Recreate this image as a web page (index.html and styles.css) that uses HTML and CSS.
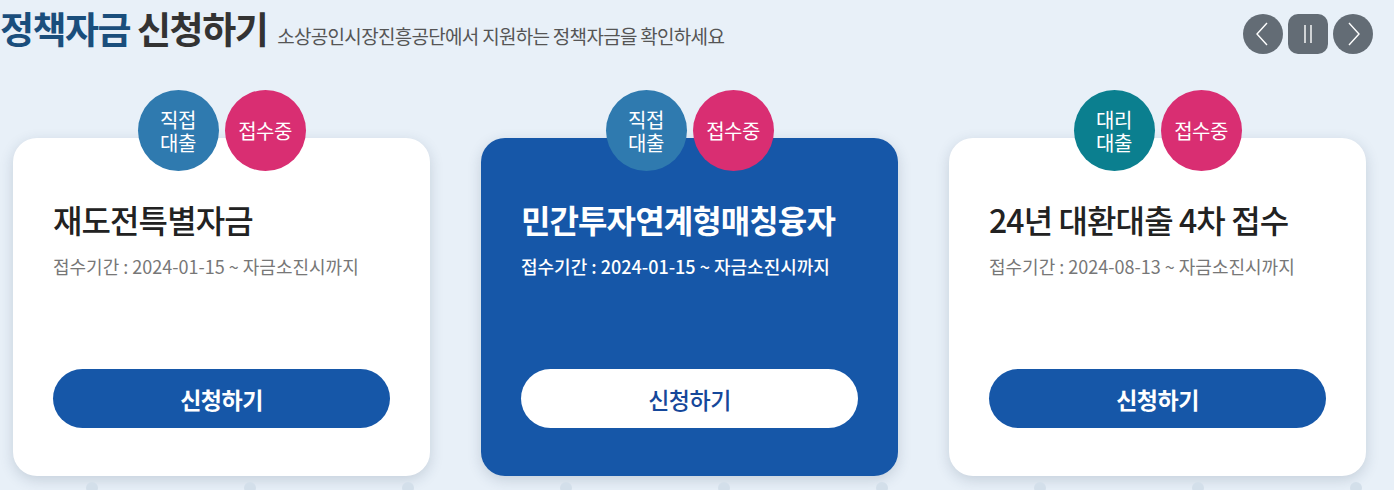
FILE: index.html
```html
<!DOCTYPE html>
<html>
<head>
  <title>정책자금 신청하기</title>
  <link rel="stylesheet" href="styles.css">
</head>
<body>

  <div class="header">
    <div class="heading">
      <h1><span class="accent">정책자금</span> 신청하기</h1>
      <p class="sub">소상공인시장진흥공단에서 지원하는 정책자금을 확인하세요</p>
    </div>
    <div class="slider-ctrl">
      <button class="ctrl round" aria-label="이전">
        <svg width="40" height="40" viewBox="0 0 40 40"><path d="M24 9 L14 20 L24 31" fill="none" stroke="#fff" stroke-width="1.4"/></svg>
      </button>
      <button class="ctrl square" aria-label="정지">
        <svg width="40" height="40" viewBox="0 0 40 40"><path d="M17 11 V29 M23 11 V29" fill="none" stroke="#fff" stroke-width="1.4"/></svg>
      </button>
      <button class="ctrl round" aria-label="다음">
        <svg width="40" height="40" viewBox="0 0 40 40"><path d="M16 9 L26 20 L16 31" fill="none" stroke="#fff" stroke-width="1.4"/></svg>
      </button>
    </div>
  </div>

  <div class="cards">
    <div class="card-wrap">
      <div class="badges">
        <span class="badge direct"><span class="line">직접</span><span class="line">대출</span></span>
        <span class="badge open">접수중</span>
      </div>
      <div class="card">
        <h2 class="card-title">재도전특별자금</h2>
        <p class="period">접수기간 : 2024-01-15 ~ 자금소진시까지</p>
        <button class="apply">신청하기</button>
      </div>
    </div>

    <div class="card-wrap">
      <div class="badges">
        <span class="badge direct"><span class="line">직접</span><span class="line">대출</span></span>
        <span class="badge open">접수중</span>
      </div>
      <div class="card active">
        <h2 class="card-title">민간투자연계형매칭융자</h2>
        <p class="period">접수기간 : 2024-01-15 ~ 자금소진시까지</p>
        <button class="apply">신청하기</button>
      </div>
    </div>

    <div class="card-wrap">
      <div class="badges">
        <span class="badge agent"><span class="line">대리</span><span class="line">대출</span></span>
        <span class="badge open">접수중</span>
      </div>
      <div class="card">
        <h2 class="card-title">24년 대환대출 4차 접수</h2>
        <p class="period">접수기간 : 2024-08-13 ~ 자금소진시까지</p>
        <button class="apply">신청하기</button>
      </div>
    </div>
  </div>

  <div class="pins">
    <span></span><span></span><span></span><span></span><span></span><span></span><span></span><span></span><span></span>
  </div>

</body>
</html>
```

FILE: styles.css
```css
body {
  margin: 0;
  font-family: "Noto Sans CJK KR", "Noto Sans", sans-serif;
  background-color: #e8f0f8;
  color: #222;
  overflow: hidden;
}

.header {
  display: flex;
  justify-content: space-between;
  align-items: center;
  height: 62px;
  padding-right: 21px;
}

.heading {
  display: flex;
  align-items: baseline;
  gap: 10px;
  margin-top: -6px;
}

.heading h1 {
  margin: 0;
  font-size: 37px;
  line-height: 44px;
  font-weight: 700;
  letter-spacing: -1.5px;
  color: #333;
}

.heading .accent {
  color: #1a4e7c;
}

.heading .sub {
  margin: 0;
  font-size: 19px;
  letter-spacing: -0.7px;
  color: #555;
}

.slider-ctrl {
  display: flex;
  gap: 5px;
  margin-top: 5px;
}

.ctrl {
  width: 40px;
  height: 40px;
  padding: 0;
  border: none;
  background: #636c75;
  cursor: pointer;
}

.ctrl svg {
  display: block;
}

.ctrl.round {
  border-radius: 50%;
}

.ctrl.square {
  border-radius: 10px;
}

.cards {
  display: flex;
  gap: 51px;
  padding-left: 13px;
  margin-top: 28px;
}

.card-wrap {
  display: flex;
  flex-direction: column;
  width: 417px;
}

.badges {
  display: flex;
  justify-content: center;
  gap: 6px;
  position: relative;
  z-index: 1;
}

.badge {
  display: flex;
  flex-direction: column;
  align-items: center;
  justify-content: center;
  width: 81px;
  height: 81px;
  border-radius: 50%;
  color: #fff;
  font-size: 20px;
  line-height: 24px;
  text-align: center;
  letter-spacing: -0.5px;
}

.badge .line {
  display: block;
  height: 23px;
  line-height: 23px;
}

.badge.direct {
  background: #2f7aaf;
}

.badge.agent {
  background: #0b7f8f;
}

.badge.open {
  background: #d92e72;
}

.card {
  display: flex;
  flex-direction: column;
  box-sizing: border-box;
  height: 338px;
  margin-top: -33px;
  padding: 60px 40px 48px;
  background: #fff;
  border-radius: 24px;
  box-shadow: 0 4px 14px rgba(40, 60, 90, 0.18);
}

.card-title {
  margin: 0;
  font-size: 32px;
  line-height: 42px;
  font-weight: 500;
  letter-spacing: -0.9px;
  color: #222;
}

.period {
  margin: 14px 0 0;
  font-size: 18px;
  line-height: 24px;
  letter-spacing: 0;
  color: #777;
}

.apply {
  margin-top: auto;
  height: 59px;
  border: none;
  border-radius: 30px;
  background: #1657a8;
  color: #fff;
  font-family: inherit;
  font-size: 23px;
  font-weight: 700;
  letter-spacing: -0.5px;
  cursor: pointer;
}

.card.active {
  background: #1657a8;
}

.card.active .card-title {
  color: #fff;
  font-weight: 700;
}

.card.active .period {
  color: #fff;
  font-weight: 500;
}

.card.active .apply {
  background: #fff;
  color: #15479a;
  font-weight: 500;
}

.pins {
  display: flex;
  gap: 146px;
  padding-left: 86px;
  margin-top: 6px;
}

.pins span {
  width: 12px;
  height: 12px;
  flex-shrink: 0;
  border-radius: 50%;
  background: #d3dfea;
}
```
